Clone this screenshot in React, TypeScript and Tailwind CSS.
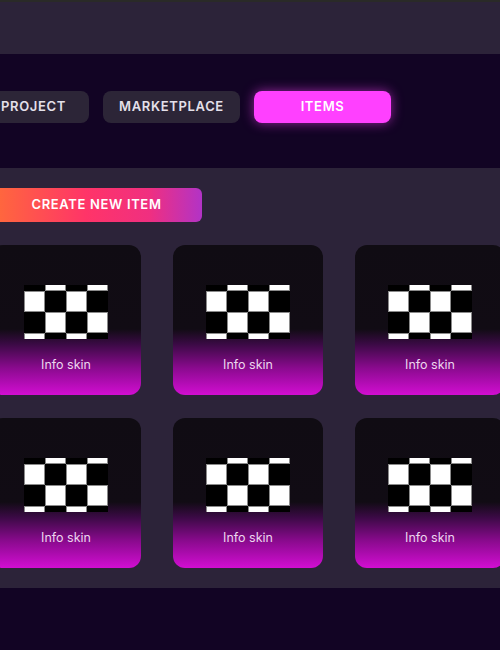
import React from 'react';

const font = { fontFamily: 'Inter, "Open Sans", Arial, sans-serif' };

function Checker() {
  const cols = [0, 1, 2, 3];
  const rows = [0, 1, 2, 3];
  return (
    <svg width="84" height="54" viewBox="0 0 84 54" className="block">
      <rect x="0" y="0" width="84" height="54" fill="#000" />
      {rows.map((r) =>
        cols.map((c) =>
          (r + c) % 2 === 1 ? (
            <rect
              key={`${r}-${c}`}
              x={c * 21 + 0.5}
              y={r * 21 - 15 + 0.5}
              width="20"
              height="20"
              fill="#fff"
              stroke="#8a8a8a"
              strokeWidth="1"
            />
          ) : null
        )
      )}
    </svg>
  );
}

function ItemCard() {
  return (
    <div className="w-[150px] h-[150px] shrink-0 rounded-[12px] flex flex-col items-center pt-[40px] bg-[linear-gradient(to_bottom,#100c13_0%,#110c14_56%,#3a0a44_66%,#8a0a8e_82%,#d20ed2_100%)]">
      <Checker />
      <div className="mt-[18px] text-[12.5px] leading-4 text-[#ecd6ee]" style={font}>
        Info skin
      </div>
    </div>
  );
}

function Tab({ label, active = false, wide = true }: { label: string; active?: boolean; wide?: boolean }) {
  const size = wide ? 'w-[137px]' : 'w-[111px]';
  return (
    <button
      className={
        active
          ? `${size} h-[32px] shrink-0 rounded-[8px] bg-[#ff40ff] text-white text-[13px] font-semibold tracking-[0.05em] shadow-[0_0_12px_rgba(255,64,255,0.55)]`
          : `${size} h-[32px] shrink-0 rounded-[8px] bg-[#2c2537] text-[#e4e0ea] text-[13px] font-semibold tracking-[0.05em]`
      }
      style={font}
    >
      {label}
    </button>
  );
}

export default function App() {
  return (
    <div className="w-[500px] h-[650px] overflow-hidden bg-[#120424]">
      <div className="h-[2px] bg-[#2a2a28]" />
      <div className="h-[52px] bg-[#2c2339]" />

      <div className="h-[114px] bg-[#120424] pt-[37px]">
        <div className="flex gap-[14px] -ml-[22px]">
          <Tab label="PROJECT" wide={false} />
          <Tab label="MARKETPLACE" />
          <Tab label="ITEMS" active />
        </div>
      </div>

      <div className="bg-[#2c2339] pt-[20px] pb-[20px]">
        <div className="-ml-[9px]">
          <button
            className="w-[211px] h-[34px] rounded-[6px] text-white text-[13px] font-semibold tracking-[0.05em] bg-[linear-gradient(to_right,#ff6b3a_0%,#ff3468_45%,#f02f80_75%,#b233c6_100%)]"
            style={font}
          >
            CREATE NEW ITEM
          </button>

          <div className="mt-[23px] grid grid-cols-[150px_150px_150px] gap-x-[32px] gap-y-[23px]">
            {Array.from({ length: 6 }).map((_, i) => (
              <ItemCard key={i} />
            ))}
          </div>
        </div>
      </div>
    </div>
  );
}
